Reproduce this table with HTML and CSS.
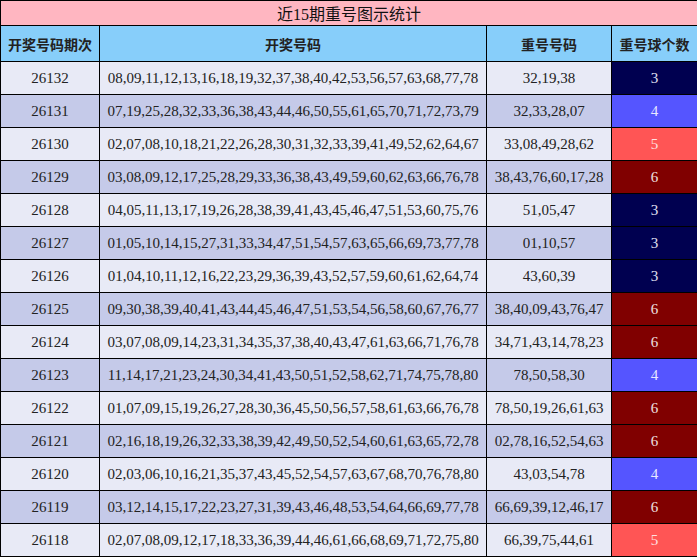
FILE: index.html
```html
<!DOCTYPE html>
<html lang="zh">
<head>
<meta charset="utf-8">
<title>近15期重号图示统计</title>
<link rel="stylesheet" href="styles.css">
</head>
<body>
<table class="stats">
  <colgroup>
    <col class="c1"><col class="c2"><col class="c3"><col class="c4">
  </colgroup>
  <thead>
    <tr class="title"><th colspan="4">近15期重号图示统计</th></tr>
    <tr class="head"><th>开奖号码期次</th><th>开奖号码</th><th>重号号码</th><th>重号球个数</th></tr>
  </thead>
  <tbody>
    <tr class="light"><td>26132</td><td>08,09,11,12,13,16,18,19,32,37,38,40,42,53,56,57,63,68,77,78</td><td>32,19,38</td><td class="n3">3</td></tr>
    <tr class="dark"><td>26131</td><td>07,19,25,28,32,33,36,38,43,44,46,50,55,61,65,70,71,72,73,79</td><td>32,33,28,07</td><td class="n4">4</td></tr>
    <tr class="light"><td>26130</td><td>02,07,08,10,18,21,22,26,28,30,31,32,33,39,41,49,52,62,64,67</td><td>33,08,49,28,62</td><td class="n5">5</td></tr>
    <tr class="dark"><td>26129</td><td>03,08,09,12,17,25,28,29,33,36,38,43,49,59,60,62,63,66,76,78</td><td>38,43,76,60,17,28</td><td class="n6">6</td></tr>
    <tr class="light"><td>26128</td><td>04,05,11,13,17,19,26,28,38,39,41,43,45,46,47,51,53,60,75,76</td><td>51,05,47</td><td class="n3">3</td></tr>
    <tr class="dark"><td>26127</td><td>01,05,10,14,15,27,31,33,34,47,51,54,57,63,65,66,69,73,77,78</td><td>01,10,57</td><td class="n3">3</td></tr>
    <tr class="light"><td>26126</td><td>01,04,10,11,12,16,22,23,29,36,39,43,52,57,59,60,61,62,64,74</td><td>43,60,39</td><td class="n3">3</td></tr>
    <tr class="dark"><td>26125</td><td>09,30,38,39,40,41,43,44,45,46,47,51,53,54,56,58,60,67,76,77</td><td>38,40,09,43,76,47</td><td class="n6">6</td></tr>
    <tr class="light"><td>26124</td><td>03,07,08,09,14,23,31,34,35,37,38,40,43,47,61,63,66,71,76,78</td><td>34,71,43,14,78,23</td><td class="n6">6</td></tr>
    <tr class="dark"><td>26123</td><td>11,14,17,21,23,24,30,34,41,43,50,51,52,58,62,71,74,75,78,80</td><td>78,50,58,30</td><td class="n4">4</td></tr>
    <tr class="light"><td>26122</td><td>01,07,09,15,19,26,27,28,30,36,45,50,56,57,58,61,63,66,76,78</td><td>78,50,19,26,61,63</td><td class="n6">6</td></tr>
    <tr class="dark"><td>26121</td><td>02,16,18,19,26,32,33,38,39,42,49,50,52,54,60,61,63,65,72,78</td><td>02,78,16,52,54,63</td><td class="n6">6</td></tr>
    <tr class="light"><td>26120</td><td>02,03,06,10,16,21,35,37,43,45,52,54,57,63,67,68,70,76,78,80</td><td>43,03,54,78</td><td class="n4">4</td></tr>
    <tr class="dark"><td>26119</td><td>03,12,14,15,17,22,23,27,31,39,43,46,48,53,54,64,66,69,77,78</td><td>66,69,39,12,46,17</td><td class="n6">6</td></tr>
    <tr class="light"><td>26118</td><td>02,07,08,09,12,17,18,33,36,39,44,46,61,66,68,69,71,72,75,80</td><td>66,39,75,44,61</td><td class="n5">5</td></tr>
  </tbody>
</table>
</body>
</html>
```
FILE: styles.css
```css
html, body {
  margin: 0;
  padding: 0;
  background: #ffffff;
}

.stats {
  border-collapse: collapse;
  table-layout: fixed;
  width: 697px;
  font-family: "Liberation Serif", "Noto Sans CJK SC", serif;
  font-size: 15px;
  color: #222222;
}

.c1 { width: 99px; }
.c2 { width: 387px; }
.c3 { width: 125px; }
.c4 { width: 86px; }

.stats th,
.stats td {
  border: 1px solid #000000;
  padding: 0;
  text-align: center;
  white-space: nowrap;
}

.title th {
  background: #ffb6c1;
  height: 24px;
  font-weight: normal;
  font-size: 16px;
  color: #111111;
}

.head th {
  background: #87cefa;
  height: 35px;
  font-family: "Noto Sans CJK SC", sans-serif;
  font-weight: bold;
  font-size: 14px;
  color: #222222;
}

.stats td {
  height: 32px;
}

.light td { background: #e8eaf6; }
.dark td { background: #c5cae9; }

.stats td.n3 { background: #000050; color: #e0e0f0; }
.stats td.n4 { background: #5555ff; color: #e8e8ff; }
.stats td.n5 { background: #ff5555; color: #ffe0e0; }
.stats td.n6 { background: #800000; color: #f0e0e0; }
```
